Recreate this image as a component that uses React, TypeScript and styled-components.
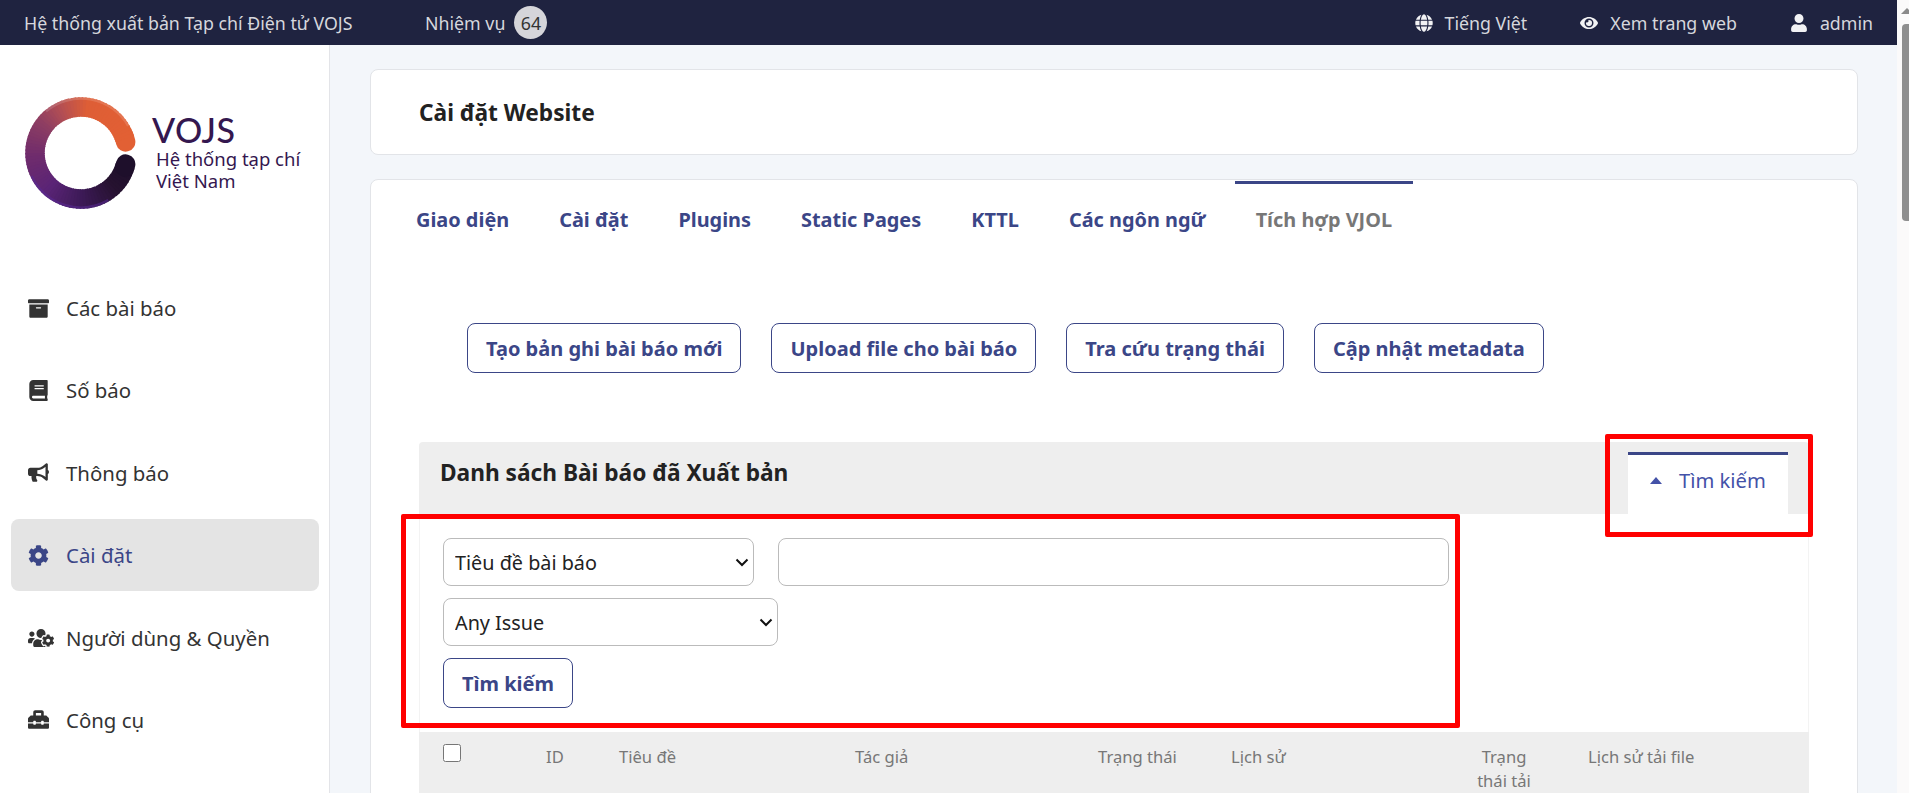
import React from 'react';
import styled, { createGlobalStyle } from 'styled-components';
import { FaArchive, FaBook, FaBullhorn, FaCog, FaUsersCog, FaToolbox, FaGlobe, FaEye, FaUser } from 'react-icons/fa';

const Global = createGlobalStyle`
  html, body { margin: 0; padding: 0; height: 100%; overflow: hidden; }
  body { font-family: "Noto Sans", "Liberation Sans", sans-serif; color: #222; }
  * { box-sizing: border-box; }
`;

const Shell = styled.div`display: flex; height: 100vh; overflow: hidden;`;
const Page = styled.div`flex: 1; min-width: 0; display: flex; flex-direction: column;`;

const TopBar = styled.header`
  height: 45px; flex: none; background: #1f2340; color: #d6d7dd;
  display: flex; align-items: center; padding: 0 24px; font-size: 17.8px;
`;
const BrandText = styled.span`width: 401px; flex: none;`;
const Badge = styled.span`
  width: 33px; height: 33px; border-radius: 50%; background: #d5d5da; color: #333;
  display: inline-flex; align-items: center; justify-content: center; margin-left: 9px;
`;
const TopRight = styled.div`margin-left: auto; display: flex; align-items: center;`;
const TopLink = styled.span`
  display: inline-flex; align-items: center; gap: 12px; margin-left: 53px;
  svg { height: 18px; width: auto; color: #f2f2f4; }
`;

const Body = styled.div`flex: 1; display: flex; min-height: 0;`;
const Sidebar = styled.aside`
  width: 330px; flex: none; background: #fff; border-right: 1px solid #e3e4e8;
  display: flex; flex-direction: column;
`;
const LogoBlock = styled.div`display: flex; padding: 52px 0 0 25px; height: 227px;`;
const LogoText = styled.div`margin: 15px 0 0 15px; color: #34174f;`;
const LogoName = styled.div`font-family: Lato, sans-serif; font-size: 34px; line-height: 36px; font-weight: 500; letter-spacing: 0.5px;`;
const LogoSub = styled.div`font-size: 18.5px; line-height: 22px; margin: 0 0 0 4px;`;

const Nav = styled.nav`display: flex; flex-direction: column; gap: 10.4px; margin: 0 10px 0 11px;`;
const NavItem = styled.a<{ $active?: boolean }>`
  height: 72px; display: flex; align-items: center; padding-left: 17px; border-radius: 8px;
  font-size: 20.4px; color: ${p => (p.$active ? '#3b4687' : '#333')};
  background: ${p => (p.$active ? '#e4e4e4' : 'transparent')};
`;
const NavIcon = styled.span<{ $size?: number }>`
  width: 38px; flex: none; display: inline-flex; align-items: center;
  svg { height: ${p => p.$size ?? 21}px; width: auto; flex: none; }
`;

const Main = styled.main`flex: 1; min-width: 0; background: #f3f6fa; padding: 24px 39px 0 40px; overflow: hidden;`;
const Card = styled.section`background: #fff; border: 1px solid #e2e4e8; border-radius: 8px;`;
const TitleCard = styled(Card)`height: 86px; display: flex; align-items: center; padding-left: 48px; margin-bottom: 24px;`;
const PageTitle = styled.h1`margin: 0; font-size: 22.7px; font-weight: 700; color: #222;`;
const ContentCard = styled(Card)`padding-top: 1px;`;

const Tabs = styled.div`display: flex; gap: 8px; padding-left: 24px; height: 78px;`;
const Tab = styled.a<{ $active?: boolean }>`
  padding: 0 21px 5px; display: flex; align-items: center; font-size: 19.9px; font-weight: 700;
  border-top: 3px solid ${p => (p.$active ? '#3b4687' : 'transparent')};
  color: ${p => (p.$active ? '#777' : '#3b4687')};
`;

const Content = styled.div`padding: 64px 48px 0;`;
const ActionRow = styled.div`display: flex; gap: 30px; padding-left: 48px; margin-bottom: 69px;`;
const OutlineButton = styled.button`
  height: 50px; padding: 0 18px; background: #fff; border: 1px solid #3b4687; border-radius: 8px;
  font: 700 20px "Noto Sans", sans-serif; color: #3b4687;
`;

const Panel = styled.div`position: relative;`;
const PanelHead = styled.div`
  height: 72px; background: #eee; border-radius: 4px 4px 0 0; display: flex;
  justify-content: space-between; padding: 10px 21px 0;
`;
const PanelTitle = styled.h2`margin: 6px 0 0; font-size: 22.7px; line-height: 30px; font-weight: 700; color: #222;`;
const PanelTab = styled.a`
  width: 160px; background: #fff; border-top: 3px solid #3b4687; display: flex; align-items: flex-start;
  padding: 11px 0 0 22px; font-size: 20.2px; color: #4452a8; gap: 17px;
`;
const Caret = styled.span`
  margin-top: 11px; width: 0; height: 0; border-left: 6px solid transparent; border-right: 6px solid transparent;
  border-bottom: 7px solid #4452a8;
`;

const FormBody = styled.div`
  padding: 24px 23px; border: solid #f3f3f3; border-width: 0 1px; display: flex; flex-direction: column;
  gap: 12px; align-items: flex-start;
`;
const FormRow = styled.div`display: flex; gap: 24px;`;
const chevron = `url("data:image/svg+xml,%3Csvg xmlns='http://www.w3.org/2000/svg' width='14' height='9' viewBox='0 0 14 9'%3E%3Cpath d='M1.5 1.5L7 7l5.5-5.5' fill='none' stroke='%23111' stroke-width='2'/%3E%3C/svg%3E")`;
const Select = styled.select<{ $w: number }>`
  appearance: none; width: ${p => p.$w}px; height: 48px; border: 1px solid #bbb; border-radius: 8px;
  background: #fff ${chevron} no-repeat right 4px center;
  padding: 0 11px; font: 19.8px "Noto Sans", sans-serif; color: #222;
`;
const TextInput = styled.input`width: 671px; height: 48px; border: 1px solid #bbb; border-radius: 8px; background: #fff;`;

const TableHead = styled.div`
  height: 200px; background: #eee; padding: 12px 24px 0; display: grid; color: #777; font-size: 16.6px; line-height: 24px;
  grid-template-columns: 103px 73px 236px 243px 133px 240px 66px 1fr;
  align-items: start;
`;
const HeadCell = styled.span<{ $center?: boolean }>`
  padding-top: 1px; text-align: ${p => (p.$center ? 'center' : 'left')};
`;
const LastCell = styled(HeadCell)`padding-left: 51px;`;
const Check = styled.input`width: 18px; height: 18px; margin: 0; accent-color: #3b4687;`;

const RedBox = styled.div<{ $l: number; $t: number; $w: number; $h: number }>`
  position: absolute; left: ${p => p.$l}px; top: ${p => p.$t}px; width: ${p => p.$w}px; height: ${p => p.$h}px;
  border: 5px solid #ff0000; border-radius: 2px; pointer-events: none;
`;

const Rail = styled.div`width: 12px; flex: none; background: #fbfafa; padding: 8px 0 0 4px; overflow: hidden;`;
const RailArrow = styled.div`
  width: 0; height: 0; border-left: 6px solid transparent; border-right: 6px solid transparent;
  border-bottom: 6px solid #8a8a8a;
`;
const RailThumb = styled.div`margin: 10px 0 0 1px; width: 12px; height: 197px; background: #8f8f8f; border-radius: 4px 0 0 4px;`;

const stops: [number, number[]][] = [
  [0, [226, 96, 52]], [0.2, [222, 94, 54]], [0.3, [178, 78, 84]], [0.38, [142, 62, 98]],
  [0.5, [112, 44, 108]], [0.64, [90, 36, 118]], [0.77, [60, 26, 86]], [0.9, [38, 18, 48]], [1, [29, 15, 42]],
];
const colorAt = (t: number) => {
  let i = 0;
  while (i < stops.length - 2 && t > stops[i + 1][0]) i++;
  const [a, ca] = stops[i];
  const [b, cb] = stops[i + 1];
  const k = (t - a) / (b - a);
  return `rgb(${ca.map((v, n) => Math.round(v + (cb[n] - v) * k)).join(',')})`;
};
const CX = 56, CY = 56, R = 46, START = 14, SWEEP = 332, N = 90;
const pt = (deg: number, r = R) => {
  const a = (deg * Math.PI) / 180;
  return [CX + r * Math.cos(a), CY - r * Math.sin(a)];
};
const rim = (from: number, to: number, r: number) => {
  const [x0, y0] = pt(from, r);
  const [x1, y1] = pt(to, r);
  return `M${x0} ${y0}A${r} ${r} 0 0 0 ${x1} ${y1}`;
};

function Logo() {
  const segs = Array.from({ length: N }, (_, i) => {
    const a0 = START + (SWEEP * i) / N;
    const a1 = START + (SWEEP * (i + 1.4)) / N;
    const [x0, y0] = pt(a0);
    const [x1, y1] = pt(Math.min(a1, START + SWEEP));
    return (
      <path key={i} d={`M${x0} ${y0}A${R} ${R} 0 0 0 ${x1} ${y1}`} fill="none" stroke={colorAt(i / N)} strokeWidth={19.5}
        strokeLinecap={i === 0 || i === N - 1 ? 'round' : 'butt'} />
    );
  });
  return (
    <svg width="112" height="112" viewBox="0 0 112 112" style={{ flex: 'none' }}>
      {segs}
      <path d={rim(30, 130, 54.5)} fill="none" stroke="#fff" strokeOpacity={0.14} strokeWidth={2.5} />
      <path d={rim(205, 300, 54.5)} fill="none" stroke="#5a2a96" strokeOpacity={0.55} strokeWidth={2.5} />
    </svg>
  );
}

const navItems = [
  { label: 'Các bài báo', icon: <FaArchive /> },
  { label: 'Số báo', icon: <FaBook /> },
  { label: 'Thông báo', icon: <FaBullhorn /> },
  { label: 'Cài đặt', icon: <FaCog />, active: true },
  { label: 'Người dùng & Quyền', icon: <FaUsersCog />, size: 26 },
  { label: 'Công cụ', icon: <FaToolbox /> },
];
const tabs = ['Giao diện', 'Cài đặt', 'Plugins', 'Static Pages', 'KTTL', 'Các ngôn ngữ'];
const actions = ['Tạo bản ghi bài báo mới', 'Upload file cho bài báo', 'Tra cứu trạng thái', 'Cập nhật metadata'];

export default function App() {
  return (
    <Shell>
      <Global />
      <Page>
        <TopBar>
          <BrandText>Hệ thống xuất bản Tạp chí Điện tử VOJS</BrandText>
          <span>Nhiệm vụ</span>
          <Badge>64</Badge>
          <TopRight>
            <TopLink><FaGlobe />Tiếng Việt</TopLink>
            <TopLink><FaEye />Xem trang web</TopLink>
            <TopLink><FaUser />admin</TopLink>
          </TopRight>
        </TopBar>
        <Body>
          <Sidebar>
            <LogoBlock>
              <Logo />
              <LogoText>
                <LogoName>VOJS</LogoName>
                <LogoSub>Hệ thống tạp chí<br />Việt Nam</LogoSub>
              </LogoText>
            </LogoBlock>
            <Nav>
              {navItems.map(n => (
                <NavItem key={n.label} $active={n.active}>
                  <NavIcon $size={n.size}>{n.icon}</NavIcon>{n.label}
                </NavItem>
              ))}
            </Nav>
          </Sidebar>
          <Main>
            <TitleCard><PageTitle>Cài đặt Website</PageTitle></TitleCard>
            <ContentCard>
              <Tabs>
                {tabs.map(t => <Tab key={t}>{t}</Tab>)}
                <Tab $active>Tích hợp VJOL</Tab>
              </Tabs>
              <Content>
                <ActionRow>
                  {actions.map(a => <OutlineButton key={a}>{a}</OutlineButton>)}
                </ActionRow>
                <Panel>
                  <PanelHead>
                    <PanelTitle>Danh sách Bài báo đã Xuất bản</PanelTitle>
                    <PanelTab><Caret />Tìm kiếm</PanelTab>
                  </PanelHead>
                  <FormBody>
                    <FormRow>
                      <Select $w={311}><option>Tiêu đề bài báo</option></Select>
                      <TextInput />
                    </FormRow>
                    <Select $w={335}><option>Any Issue</option></Select>
                    <OutlineButton>Tìm kiếm</OutlineButton>
                  </FormBody>
                  <TableHead>
                    <Check type="checkbox" />
                    <HeadCell>ID</HeadCell>
                    <HeadCell>Tiêu đề</HeadCell>
                    <HeadCell>Tác giả</HeadCell>
                    <HeadCell>Trạng thái</HeadCell>
                    <HeadCell>Lịch sử</HeadCell>
                    <HeadCell $center>Trạng thái tải</HeadCell>
                    <LastCell>Lịch sử tải file</LastCell>
                  </TableHead>
                  <RedBox $l={-18} $t={72} $w={1059} $h={214} />
                  <RedBox $l={1186} $t={-8} $w={208} $h={103} />
                </Panel>
              </Content>
            </ContentCard>
          </Main>
        </Body>
      </Page>
      <Rail>
        <RailArrow />
        <RailThumb />
      </Rail>
    </Shell>
  );
}
